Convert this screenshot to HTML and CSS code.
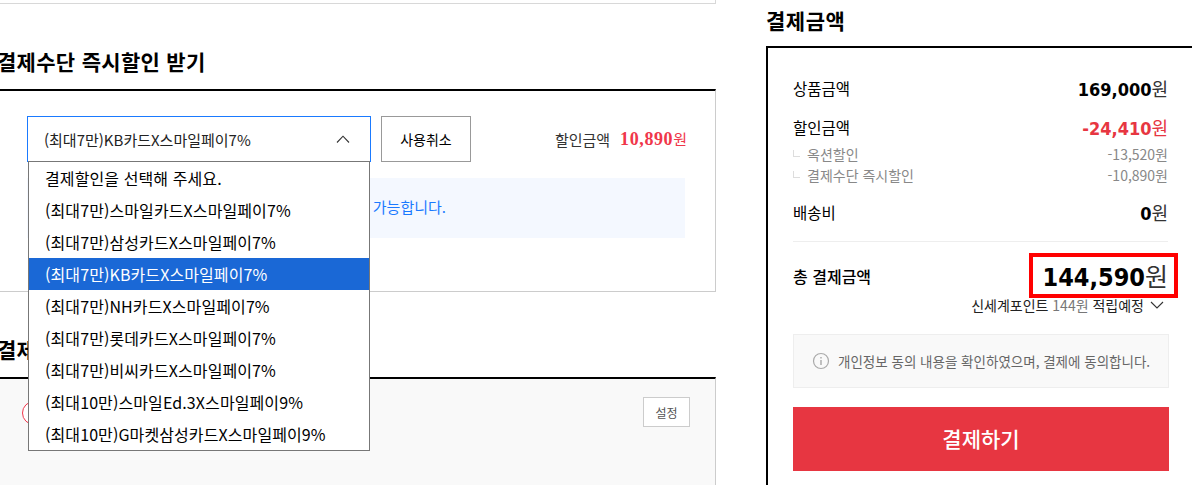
FILE: index.html
```html
<!DOCTYPE html>
<html lang="ko">
<head>
    <meta charset="UTF-8">
    <meta name="viewport" content="width=device-width, initial-scale=1.0">
    <title>결제금액</title>
    <link rel="stylesheet" href="styles.css">
</head>
<body>
    <div class="page">
        <div class="main">
            <div class="prev-card"></div>

            <h2 class="section-title">결제수단 즉시할인 받기</h2>
            <div class="discount-card">
                <div class="discount-row">
                    <div class="select-wrap">
                        <div class="select-box">
                            <span>(최대7만)KB카드X스마일페이7%</span>
                            <svg class="select-arrow" width="14" height="8" viewBox="0 0 14 8"><path d="M1 7.5L7 1.2l6 6.3" fill="none" stroke="#333" stroke-width="1.1"/></svg>
                        </div>
                        <ul class="select-list">
                            <li>결제할인을 선택해 주세요.</li>
                            <li>(최대7만)스마일카드X스마일페이7%</li>
                            <li>(최대7만)삼성카드X스마일페이7%</li>
                            <li class="active">(최대7만)KB카드X스마일페이7%</li>
                            <li>(최대7만)NH카드X스마일페이7%</li>
                            <li>(최대7만)롯데카드X스마일페이7%</li>
                            <li>(최대7만)비씨카드X스마일페이7%</li>
                            <li>(최대10만)스마일Ed.3X스마일페이9%</li>
                            <li>(최대10만)G마켓삼성카드X스마일페이9%</li>
                        </ul>
                    </div>
                    <button class="cancel-btn">사용취소</button>
                    <div class="discount-amount">
                        <span class="label">할인금액</span>
                        <span class="value"><b>10,890</b>원</span>
                    </div>
                </div>
                <p class="discount-note">즉시할인은 결제수단 1개에만 가능합니다.</p>
            </div>

            <h2 class="section-title">결제수단 선택</h2>
            <div class="method-card">
                <span class="method-logo"></span>
                <button class="setting-btn">설정</button>
            </div>
        </div>

        <aside class="side">
            <h2 class="side-title">결제금액</h2>
            <div class="summary">
                <div class="sum-row first">
                    <span>상품금액</span>
                    <span class="price"><b>169,000</b>원</span>
                </div>
                <div class="sum-row sale">
                    <span>할인금액</span>
                    <span class="price red"><b>-24,410</b>원</span>
                </div>
                <div class="sub-row first">
                    <span class="sub-name">옥션할인</span>
                    <span>-13,520원</span>
                </div>
                <div class="sub-row">
                    <span class="sub-name">결제수단 즉시할인</span>
                    <span>-10,890원</span>
                </div>
                <div class="sum-row ship">
                    <span>배송비</span>
                    <span class="price"><b>0</b>원</span>
                </div>
                <div class="total-row">
                    <span class="total-label">총 결제금액</span>
                    <span class="total-price"><b>144,590</b>원</span>
                </div>
                <div class="point-row">
                    <span>신세계포인트 <em>144원</em> 적립예정</span>
                    <svg width="14" height="8" viewBox="0 0 14 8"><path d="M1 1l6 6 6-6" fill="none" stroke="#333" stroke-width="1.1"/></svg>
                </div>
                <div class="agree-box">
                    <svg width="18" height="18" viewBox="0 0 18 18"><circle cx="9" cy="9" r="7.5" fill="none" stroke="#aaa" stroke-width="1.2"/><path d="M9 8v5M9 5v1.4" stroke="#999" stroke-width="1.2"/></svg>
                    <span>개인정보 동의 내용을 확인하였으며, 결제에 동의합니다.</span>
                </div>
                <button class="pay-btn">결제하기</button>
            </div>
        </aside>
    </div>
</body>
</html>
```

FILE: styles.css
```css
:root {
    --kr-font: "Noto Sans CJK KR", "Noto Sans", sans-serif;
    --num-font: "DejaVu Sans Condensed", "DejaVu Sans", "Noto Sans CJK KR", sans-serif;
    --red: #e73641;
    --line: #ccc;
}

html,
body {
    margin: 0;
    height: 485px;
    overflow: hidden;
    background: #fff;
}

body {
    font-family: var(--kr-font);
    color: #000;
}

h2,
p,
ul {
    margin: 0;
    padding: 0;
}

button {
    font-family: inherit;
    cursor: pointer;
    padding: 0;
}

.page {
    display: flex;
    height: 485px;
    overflow: hidden;
}

.main {
    flex: none;
    width: 716px;
}

.prev-card {
    height: 3px;
    border-bottom: 1px solid #d8d8d8;
    border-right: 1px solid #d8d8d8;
}

.section-title {
    height: 42px;
    margin: 43px 0 0 -3px;
    font-size: 21px;
    line-height: 28px;
    font-weight: 700;
    letter-spacing: 0.3px;
}

.discount-card {
    height: 175px;
    padding: 25px 30px 0 27px;
    border-top: 2px solid #000;
    border-right: 1px solid var(--line);
    border-bottom: 1px solid var(--line);
}

.discount-row {
    display: flex;
    align-items: center;
    height: 46px;
}

.select-wrap {
    position: relative;
    width: 344px;
    height: 46px;
}

.select-box {
    display: flex;
    align-items: center;
    justify-content: space-between;
    box-sizing: border-box;
    height: 46px;
    padding: 0 20px 0 16px;
    border: 1px solid #1a7aff;
    font-size: 15px;
    color: #222;
}

.select-list {
    position: absolute;
    z-index: 5;
    top: 45px;
    left: 1px;
    width: 340px;
    list-style: none;
    background: #fff;
    border: 1px solid #777;
}

.select-list li {
    height: 32px;
    line-height: 33px;
    padding-left: 16px;
    font-size: 16px;
    letter-spacing: 0.1px;
    white-space: nowrap;
}

.select-list li.active {
    background: #1a68d6;
    color: #fff;
}

.cancel-btn {
    width: 90px;
    height: 46px;
    margin-left: 10px;
    background: #fff;
    border: 1px solid #999;
    font-size: 14px;
    color: #000;
}

.discount-amount {
    display: flex;
    align-items: center;
    margin: 0 -2px 0 auto;
    font-size: 15px;
    color: #333;
}

.discount-amount .value {
    margin-left: 10px;
    color: #f0364a;
    font-size: 15px;
}

.discount-amount .value b {
    font-family: "Liberation Serif", serif;
    font-size: 18px;
    letter-spacing: 0.6px;
}

.discount-note {
    display: flex;
    align-items: center;
    justify-content: flex-end;
    box-sizing: border-box;
    height: 60px;
    margin-top: 16px;
    padding: 0 239px 4px 0;
    background: #f4f8ff;
    color: #1a7aff;
    font-size: 15px;
    white-space: nowrap;
}

.method-card {
    display: flex;
    align-items: flex-start;
    justify-content: space-between;
    height: 120px;
    padding: 18px 25px 0 22px;
    background: #f9f9f9;
    border-top: 2px solid #000;
    border-right: 1px solid var(--line);
}

.method-logo {
    width: 22px;
    height: 22px;
    margin-top: 4px;
    background: #fff;
    border: 1px solid #f0364a;
    border-radius: 50%;
}

.setting-btn {
    width: 47px;
    height: 30px;
    background: #fff;
    border: 1px solid var(--line);
    font-size: 12px;
    color: #555;
}

.side {
    flex: none;
    width: 430px;
    margin-left: 50px;
}

.side-title {
    height: 46px;
    font-size: 21px;
    line-height: 40px;
    font-weight: 700;
    letter-spacing: 0.5px;
}

.summary {
    box-sizing: border-box;
    width: 430px;
    height: 480px;
    padding: 0 27px 0 25px;
    border: 2px solid #000;
}

.sum-row,
.sub-row {
    display: flex;
    justify-content: space-between;
    align-items: center;
    width: 375px;
}

.sum-row {
    height: 24px;
    font-size: 15.5px;
}

.sum-row.first {
    margin-top: 28px;
}

.sum-row.sale {
    margin-top: 15px;
}

.sum-row.ship {
    margin-top: 15px;
    padding-bottom: 17px;
    border-bottom: 1px solid #eee;
}

.price {
    font-size: 18px;
    color: #333;
}

.price b {
    font-family: var(--num-font);
    color: #000;
    font-size: 18px;
}

.price.red,
.price.red b {
    color: var(--red);
}

.sub-row {
    height: 21px;
    font-size: 14px;
    color: #888;
}

.sub-row.first {
    margin-top: 4px;
}

.sub-name {
    position: relative;
    padding-left: 14px;
}

.sub-name::before {
    content: "";
    position: absolute;
    left: 0;
    top: 6px;
    width: 6px;
    height: 6px;
    border-left: 1px solid #ddd;
    border-bottom: 1px solid #ddd;
}

.total-row {
    display: flex;
    justify-content: space-between;
    align-items: center;
    width: 375px;
    height: 45px;
    margin-top: 11px;
}

.total-label {
    font-size: 16px;
    font-weight: 500;
}

.total-price {
    box-sizing: border-box;
    height: 45px;
    margin-right: -10px;
    padding: 0 6px 0 10px;
    line-height: 37px;
    border: 4px solid #f00;
    font-size: 25px;
    color: #333;
}

.total-price b {
    font-family: var(--num-font);
    font-size: 25px;
    color: #000;
}

.point-row {
    display: flex;
    align-items: center;
    justify-content: flex-end;
    gap: 6px;
    width: 371px;
    height: 16px;
    margin-top: -1px;
    font-size: 14px;
    color: #222;
}

.point-row em {
    font-style: normal;
    color: #777;
}

.agree-box {
    display: flex;
    align-items: center;
    gap: 8px;
    box-sizing: border-box;
    width: 376px;
    height: 54px;
    margin-top: 21px;
    padding-left: 18px;
    background: #f9f9f9;
    border: 1px solid #eee;
    font-size: 13.5px;
    color: #666;
    white-space: nowrap;
}

.pay-btn {
    display: block;
    width: 376px;
    height: 64px;
    margin-top: 19px;
    padding-bottom: 2px;
    background: var(--red);
    border: 0;
    color: #fff;
    font-size: 21px;
    font-weight: 500;
}
```
